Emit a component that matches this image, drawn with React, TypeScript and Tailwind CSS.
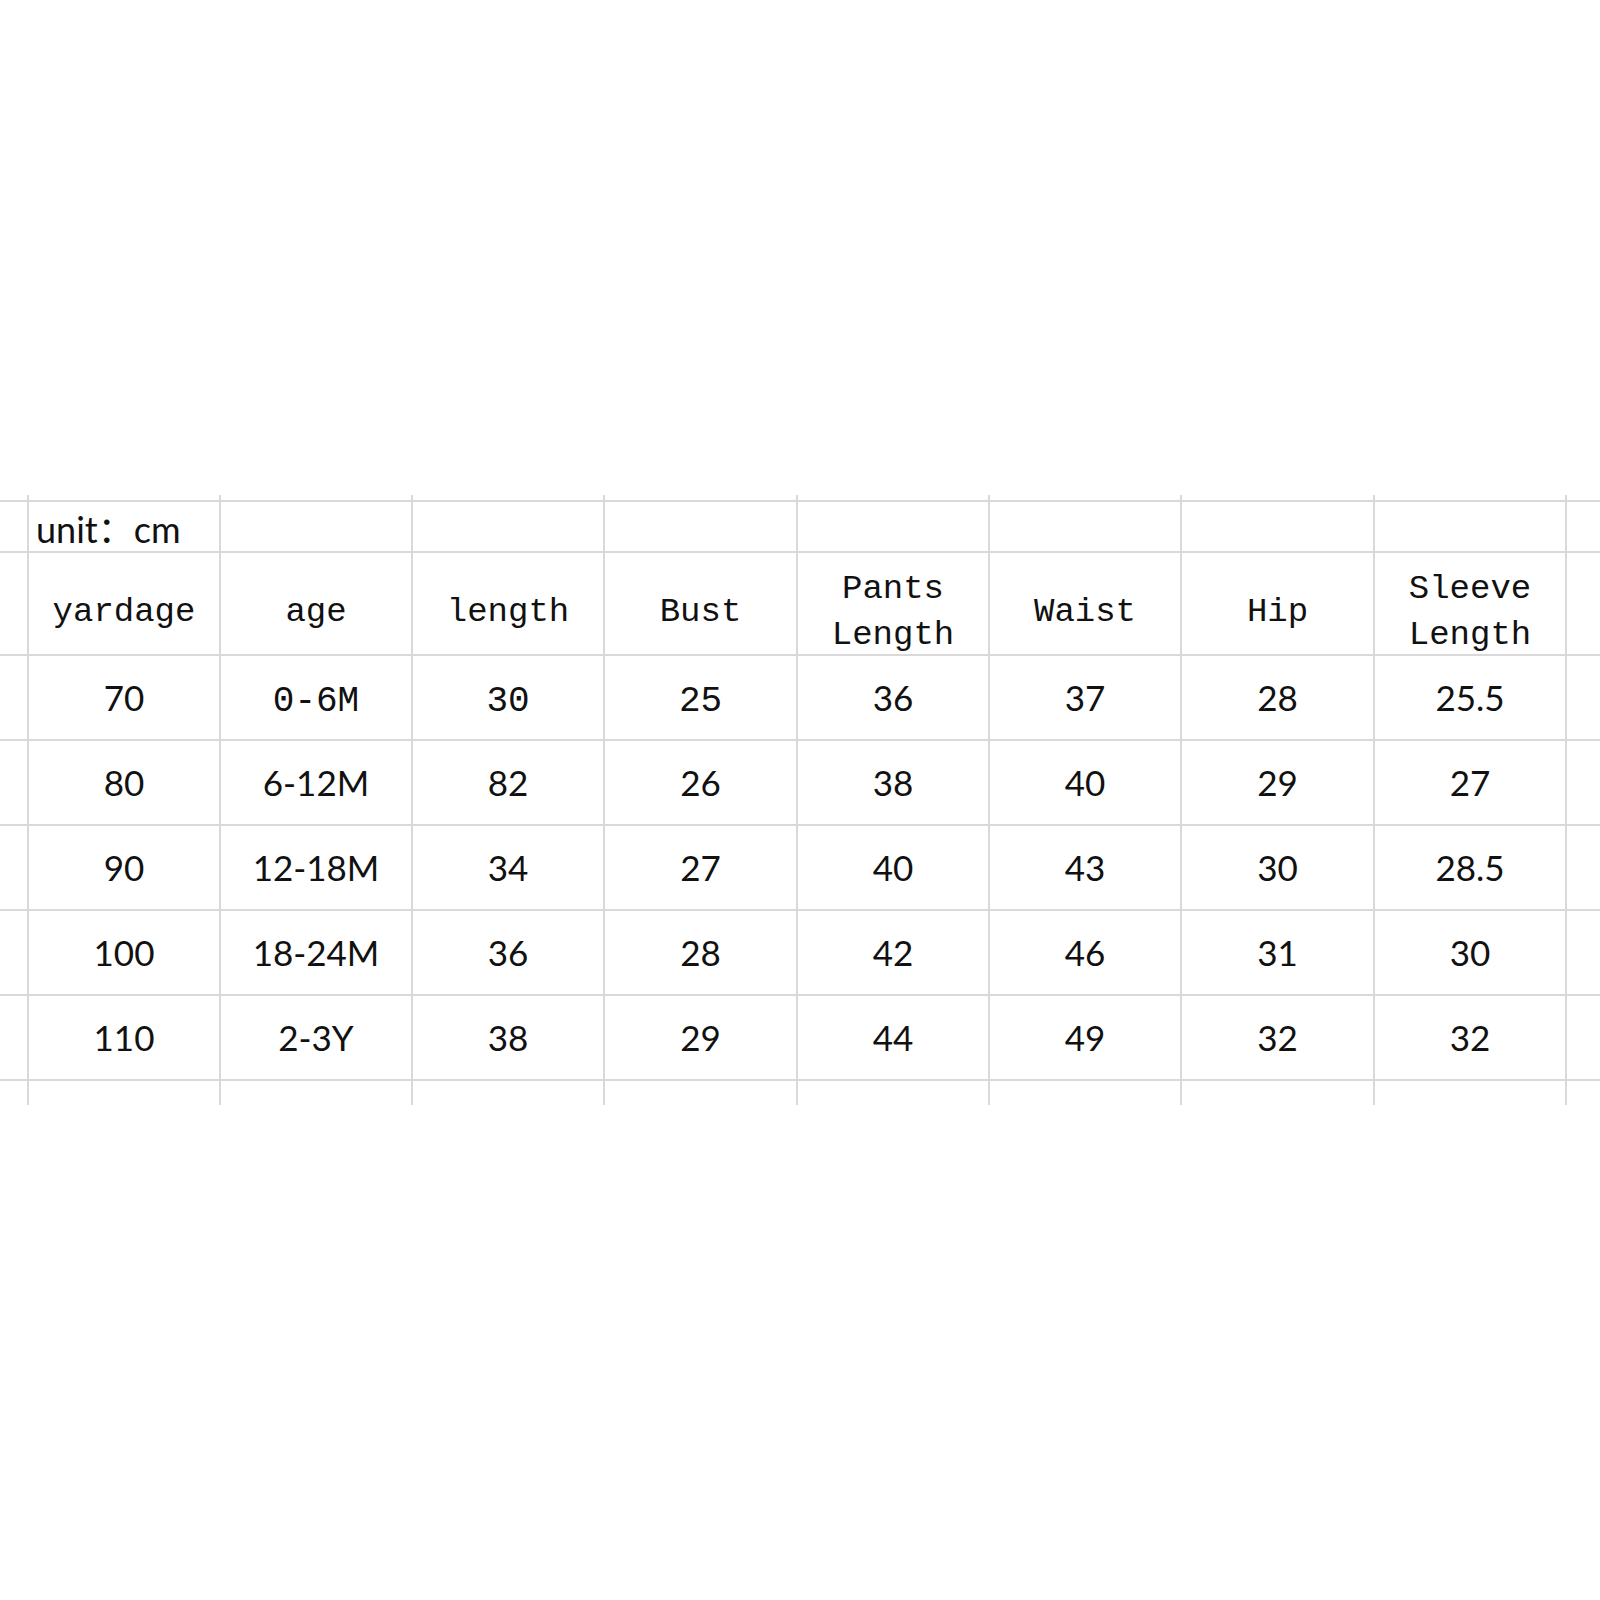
import React from "react";

const LINE = "border-[#d9d9d9]";

// column widths, first one is the clipped column on the left edge
const COLS = [
  "w-[29px]",
  "w-[192px]",
  "w-[192px]",
  "w-[192px]",
  "w-[193px]",
  "w-[192px]",
  "w-[192px]",
  "w-[193px]",
  "w-[192px]",
];

const HEADERS = ["yardage", "age", "length", "Bust", "Pants Length", "Waist", "Hip", "Sleeve Length"];

const ROWS = [
  ["70", "0-6M", "30", "25", "36", "37", "28", "25.5"],
  ["80", "6-12M", "82", "26", "38", "40", "29", "27"],
  ["90", "12-18M", "34", "27", "40", "43", "30", "28.5"],
  ["100", "18-24M", "36", "28", "42", "46", "31", "30"],
  ["110", "2-3Y", "38", "29", "44", "49", "32", "32"],
];

const mono = "font-['Liberation_Mono',monospace] text-[34px] text-[#111]";
const monoNum = "font-['Liberation_Mono',monospace] text-[36px] text-[#111]";
const sans = "font-['Lato','Noto_Sans_CJK_SC',sans-serif] text-[35px] text-[#111]";
const unit = "font-['Lato','Noto_Sans_CJK_SC',sans-serif] text-[36px] text-[#111]";

function Row({
  height,
  top,
  bottom = true,
  cells,
}: {
  height: string;
  top?: boolean;
  bottom?: boolean;
  cells: (c: number) => React.ReactNode;
}) {
  return (
    <div
      className={`flex ${height} ${bottom ? "border-b-2" : ""} ${top ? "border-t-2" : ""} ${LINE}`}
    >
      {COLS.map((w, i) => (
        <div key={i} className={`${w} shrink-0 border-r-2 ${LINE} flex`}>
          {cells(i)}
        </div>
      ))}
      <div className="flex-1" />
    </div>
  );
}

export default function App() {
  return (
    <div className="w-[1600px] h-[1600px] bg-white overflow-hidden">
      <div className="h-[495px]" />

      {/* grid lines poking above the first row */}
      <Row height="h-[5px]" bottom={false} cells={() => null} />

      <Row
        height="h-[53px]"
        top
        cells={(i) =>
          i === 1 ? (
            <div className={`${unit} w-full self-end pl-[7px] pb-[4px] leading-none whitespace-nowrap`}>
              unit：cm
            </div>
          ) : null
        }
      />

      <Row
        height="h-[103px]"
        cells={(i) =>
          i === 0 ? null : (
            <div className={`${mono} w-full flex items-center justify-center text-center leading-[46px] pt-[16px] px-2`}>
              {HEADERS[i - 1]}
            </div>
          )
        }
      />

      {ROWS.map((r, ri) => (
        <Row
          key={ri}
          height="h-[85px]"
          cells={(i) => {
            if (i === 0) return null;
            const special = ri === 0 && i >= 2 && i <= 4;
            return (
              <div
                className={`${special ? monoNum : sans} w-full flex items-center justify-center leading-none ${special ? "pt-[8px]" : ""}`}
              >
                {r[i - 1]}
              </div>
            );
          }}
        />
      ))}

      {/* grid lines hanging below the last row */}
      <Row height="h-[24px]" bottom={false} cells={() => null} />
    </div>
  );
}
